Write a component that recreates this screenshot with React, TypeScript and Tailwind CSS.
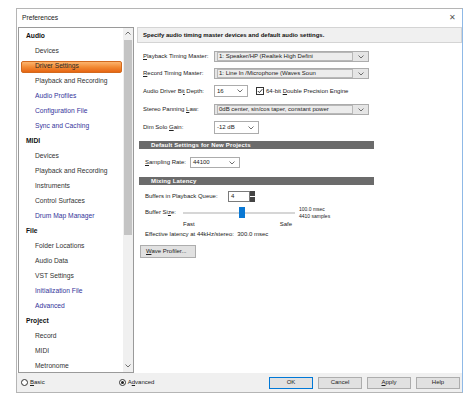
import React from "react";

type Item = { t: string; h?: boolean; sel?: boolean; blue?: boolean };

const items: Item[] = [
  { t: "Audio", h: true },
  { t: "Devices" },
  { t: "Driver Settings", sel: true },
  { t: "Playback and Recording" },
  { t: "Audio Profiles", blue: true },
  { t: "Configuration File", blue: true },
  { t: "Sync and Caching", blue: true },
  { t: "MIDI", h: true },
  { t: "Devices" },
  { t: "Playback and Recording" },
  { t: "Instruments" },
  { t: "Control Surfaces" },
  { t: "Drum Map Manager", blue: true },
  { t: "File", h: true },
  { t: "Folder Locations" },
  { t: "Audio Data" },
  { t: "VST Settings" },
  { t: "Initialization File", blue: true },
  { t: "Advanced", blue: true },
  { t: "Project", h: true },
  { t: "Record" },
  { t: "MIDI" },
  { t: "Metronome" },
];

const Chevron = ({ up = false, className = "" }: { up?: boolean; className?: string }) => (
  <svg width="6" height="4" viewBox="0 0 6 4" className={className}>
    <path
      d={up ? "M0.5 3.5 L3 1 L5.5 3.5" : "M0.5 0.5 L3 3 L5.5 0.5"}
      fill="none"
      stroke="#606060"
      strokeWidth="0.9"
    />
  </svg>
);

const U = ({ children }: { children: React.ReactNode }) => <span className="underline decoration-[0.5px] underline-offset-[1px]">{children}</span>;

const GraySelect = ({ text, w }: { text: string; w: string }) => (
  <div className={`${w} h-[11px] border border-[#acacac] bg-[#e5e5e5] flex items-center pl-[2px] pr-[4px]`}>
    <div className="flex-1 h-[9px] border border-[#b8b8b8] bg-[#ececec] flex items-center pl-[1px] text-[#222] whitespace-nowrap overflow-hidden">
      {text}
    </div>
    <Chevron className="ml-[5px]" />
  </div>
);

const WhiteSelect = ({ text, w, h = "h-[12px]" }: { text: string; w: string; h?: string }) => (
  <div className={`${w} ${h} border border-[#acacac] bg-white flex items-center pl-[2px] pr-[4px] justify-between`}>
    <span className="text-[#222] whitespace-nowrap">{text}</span>
    <Chevron />
  </div>
);

const Section = ({ title }: { title: string }) => (
  <div className="ml-[2px] w-[235px] h-[8px] bg-[#6b6b6b] flex items-center pl-[12px]">
    <span className="text-white font-bold text-[6px] tracking-[0.15px] leading-none">{title}</span>
  </div>
);

export default function App() {
  return (
    <div
      className="w-[474px] h-[406px] bg-white pt-[8px] pl-[16px] overflow-hidden"
      style={{ fontFamily: '"Liberation Sans", Arial, sans-serif' }}
    >
      <div className="w-[447px] h-[385px] border border-[#b5b5b5] border-r-[#8fb9e6] flex flex-col bg-white">
        {/* title bar */}
        <div className="h-[18px] flex items-center justify-between pl-[5px] pr-[6px]">
          <span className="text-[6.7px] text-[#222]">Preferences</span>
          <span className="text-[8px] text-[#555] leading-none">✕</span>
        </div>
        {/* body */}
        <div className="h-[346px] flex">
          {/* tree */}
          <div className="ml-[1px] w-[116px] h-full border border-[#9a9a9a] bg-white flex overflow-hidden">
            <div className="flex-1 pt-[1px] overflow-hidden">
              {items.map((it, i) => (
                <div key={i} className="h-[15px] flex items-center">
                  {it.sel ? (
                    <div className="ml-[2px] w-[101px] h-[12px] rounded-[2px] border border-[#d2691e] bg-gradient-to-b from-[#fcb46c] via-[#f28b34] to-[#e66510] flex items-center pl-[13px]">
                      <span className="text-[6.7px] text-[#2a2a2a]">{it.t}</span>
                    </div>
                  ) : it.h ? (
                    <span className="pl-[7px] text-[6.7px] font-bold text-[#111]">{it.t}</span>
                  ) : (
                    <span className={`pl-[16px] text-[6.7px] ${it.blue ? "text-[#34349a]" : "text-[#333]"}`}>{it.t}</span>
                  )}
                </div>
              ))}
            </div>
            {/* scrollbar */}
            <div className="w-[10px] h-full bg-[#f0f0f0] flex flex-col items-center">
              <div className="h-[10px] flex items-center justify-center">
                <Chevron up />
              </div>
              <div className="w-[8px] h-[195px] bg-[#c4c4c4] mt-[2px]" />
              <div className="flex-1" />
              <div className="h-[12px] flex items-center justify-center">
                <Chevron />
              </div>
            </div>
          </div>
          {/* right panel */}
          <div className="ml-[3px] flex-1 flex flex-col text-[6px] text-[#222]">
            <div className="h-[16px] border border-[#d4d4d4] bg-[#f0f0f0] flex items-center pl-[5px]">
              <span className="font-bold text-[6px] text-[#111]">Specify audio timing master devices and default audio settings.</span>
            </div>

            <div className="mt-[8px] flex items-center pl-[6px]">
              <span className="w-[71px]"><U>P</U>layback Timing Master:</span>
              <GraySelect text="1: Speaker/HP (Realtek High Defini" w="w-[155px]" />
            </div>
            <div className="mt-[6px] flex items-center pl-[6px]">
              <span className="w-[71px]"><U>R</U>ecord Timing Master:</span>
              <GraySelect text="1: Line In /Microphone (Waves Soun" w="w-[155px]" />
            </div>
            <div className="mt-[6px] h-[12px] flex items-center pl-[6px]">
              <span className="w-[71px]">Audio Driver Bi<U>t</U> Depth:</span>
              <WhiteSelect text="16" w="w-[34px]" />
              <div className="ml-[8px] w-[8px] h-[8px] border border-[#333] bg-white flex items-center justify-center">
                <svg width="6" height="6" viewBox="0 0 6 6">
                  <path d="M0.8 3 L2.4 4.6 L5.3 1.2" fill="none" stroke="#222" strokeWidth="0.9" />
                </svg>
              </div>
              <span className="ml-[2px]">64-bit <U>D</U>ouble Precision Engine</span>
            </div>
            <div className="mt-[7px] flex items-center pl-[6px]">
              <span className="w-[71px]">Stereo Panning <U>L</U>aw:</span>
              <GraySelect text="0dB center, sin/cos taper, constant power" w="w-[155px]" />
            </div>
            <div className="mt-[6px] flex items-center pl-[6px]">
              <span className="w-[71px]">Dim Solo <U>G</U>ain:</span>
              <WhiteSelect text="-12 dB" w="w-[45px]" h="h-[13px]" />
            </div>

            <div className="mt-[7px]">
              <Section title="Default Settings for New Projects" />
            </div>
            <div className="mt-[8px] flex items-center pl-[8px]">
              <span className="w-[45px]"><U>S</U>ampling Rate:</span>
              <WhiteSelect text="44100" w="w-[50px]" h="h-[11px]" />
            </div>

            <div className="mt-[9px]">
              <Section title="Mixing Latency" />
            </div>
            <div className="mt-[6px] flex items-center pl-[8px]">
              <span className="w-[83px]">Buffers in Playback Queue:</span>
              <div className="w-[22px] h-[11px] border border-[#7a7a7a] bg-white flex items-center pl-[2px]">4</div>
              <div className="w-[5px] h-[11px] flex flex-col">
                <div className="flex-1 bg-[#444] mb-[1px]" />
                <div className="flex-1 bg-[#444]" />
              </div>
            </div>
            <div className="mt-[5px] h-[11px] flex items-center pl-[8px]">
              <span className="w-[38px]">Buffer Si<U>z</U>e:</span>
              <div className="relative w-[112px] h-[11px] flex items-center">
                <div className="w-full h-[2px] bg-[#d6d6d6]" />
                <div className="absolute left-[56px] top-0 w-[6px] h-[11px] bg-[#0a78d4]" />
              </div>
              <div className="ml-[4px] flex flex-col text-[5px] leading-[7px]">
                <span>100.0 msec</span>
                <span>4410 samples</span>
              </div>
            </div>
            <div className="mt-[2px] flex">
              <span className="ml-[46px]">Fast</span>
              <span className="ml-[85px]">Safe</span>
            </div>
            <div className="mt-[1px] pl-[8px]">Effective latency at 44kHz/stereo:&nbsp;&nbsp;300.0 msec</div>
            <div className="mt-[6px] ml-[3px] w-[56px] h-[13px] border border-[#adadad] bg-[#e1e1e1] flex items-center pl-[5px]">
              <span><U>W</U>ave Profiler...</span>
            </div>
          </div>
        </div>
        {/* bottom bar */}
        <div className="flex-1 bg-[#f0f0f0] flex items-center text-[6px] text-[#222]">
          <div className="ml-[4px] w-[7px] h-[7px] rounded-full border border-[#333] bg-white" />
          <span className="ml-[2px]"><U>B</U>asic</span>
          <div className="ml-[74px] w-[7px] h-[7px] rounded-full border border-[#333] bg-white flex items-center justify-center">
            <div className="w-[3px] h-[3px] rounded-full bg-[#222]" />
          </div>
          <span className="ml-[2px]">A<U>d</U>vanced</span>
          <div className="flex-1" />
          <div className="flex gap-[5px] mr-[2px]">
            <div className="w-[44px] h-[12px] border border-[#0078d7] bg-[#e1e1e1] flex items-center justify-center">OK</div>
            <div className="w-[44px] h-[12px] border border-[#adadad] bg-[#e1e1e1] flex items-center justify-center">Cancel</div>
            <div className="w-[44px] h-[12px] border border-[#adadad] bg-[#e1e1e1] flex items-center justify-center"><span><U>A</U>pply</span></div>
            <div className="w-[44px] h-[12px] border border-[#adadad] bg-[#e1e1e1] flex items-center justify-center">Help</div>
          </div>
        </div>
      </div>
    </div>
  );
}
